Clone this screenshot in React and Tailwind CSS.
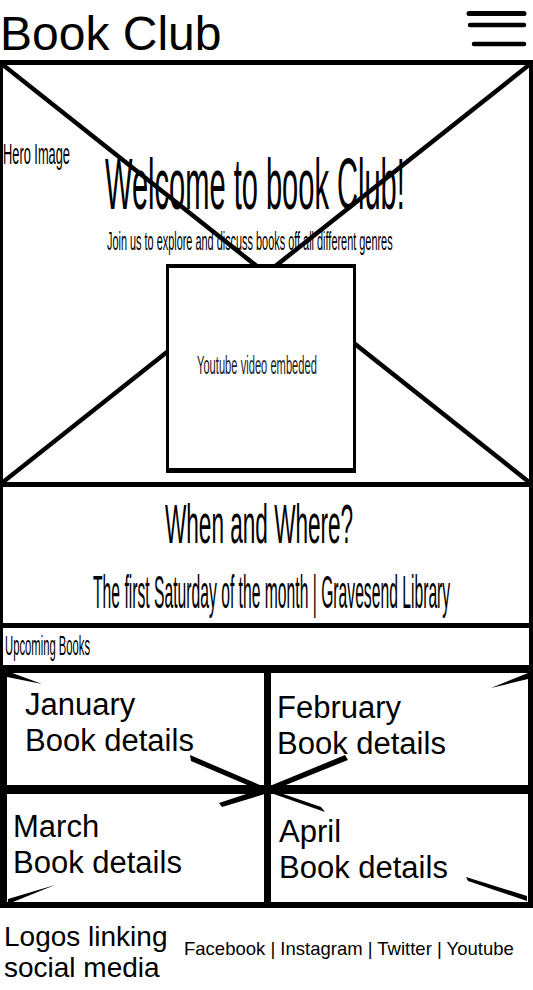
import React from 'react'

function Squeeze({ box, className, children }) {
    // narrow, tall wireframe lettering: scaled on x only, box holds the visible width
    return (
        <div className={`flex ${box}`}>
            <span className={`shrink-0 whitespace-nowrap leading-none origin-left ${className}`}>
                {children}
            </span>
        </div>
    )
}

function Menu() {
    return (
        <svg width="70" height="44" viewBox="0 0 70 44" className="mt-[8px] mr-[3px]">
            <g stroke="black" strokeLinecap="round">
                <line x1="9" y1="5.5" x2="64" y2="5.5" strokeWidth="5" />
                <line x1="10" y1="17" x2="64" y2="17" strokeWidth="4.5" />
                <line x1="14" y1="36" x2="64" y2="36" strokeWidth="4.5" />
            </g>
        </svg>
    )
}

function Cell({ month, pad }) {
    return (
        <div className={`bg-white text-[31px] leading-[36px] ${pad}`}>
            <div>{month}</div>
            <div>Book details</div>
        </div>
    )
}

export default function App() {
    return (
        <div className="w-[533px] min-h-[990px] overflow-hidden bg-white text-black font-['Liberation_Sans',Arial,sans-serif]">
            <header className="flex h-[60px] items-start justify-between">
                <h1 className="pt-[10px] text-[48px] leading-none font-normal">Book Club</h1>
                <Menu />
            </header>

            <section className="relative h-[427px] border-t-[5px] border-b-[5px] border-l-[3px] border-r-[4px] border-black">
                <svg className="absolute inset-0 h-full w-full" viewBox="0 0 100 100" preserveAspectRatio="none">
                    <line x1="0" y1="0" x2="100" y2="100" stroke="black" strokeWidth="4.5" vectorEffect="non-scaling-stroke" />
                    <line x1="100" y1="0" x2="0" y2="100" stroke="black" strokeWidth="4.5" vectorEffect="non-scaling-stroke" />
                </svg>
                <div className="absolute left-0 top-[75px]">
                    <Squeeze box="w-[67px]" className="text-[29px] scale-x-[0.442]">Hero Image</Squeeze>
                </div>
                <div className="relative flex flex-col items-center pt-[82px]">
                    <Squeeze box="w-[300px] mr-[22px]" className="text-[73px] scale-x-[0.398]">
                        Welcome to book Club!
                    </Squeeze>
                    <Squeeze box="w-[286px] mr-[32px] mt-[9px]" className="text-[25px] scale-x-[0.436]">
                        Join us to explore and discuss books off all different genres
                    </Squeeze>
                    <div className="mt-[10px] mr-[10px] flex h-[209px] w-[190px] items-center justify-center border-t-4 border-b-[5px] border-x-[3px] border-black bg-white pb-[7px]">
                        <Squeeze box="w-[121px] mr-[7px]" className="text-[26px] text-[#222] scale-x-[0.429]">
                            Youtube video embeded
                        </Squeeze>
                    </div>
                </div>
            </section>

            <section className="flex h-[141px] flex-col items-center border-b-[5px] border-l-[3px] border-r-[4px] border-black pt-[9px]">
                <Squeeze box="w-[188px] mr-[14px]" className="text-[56px] scale-x-[0.403]">When and Where?</Squeeze>
                <Squeeze box="w-[357px] ml-[11px] mt-[17px]" className="text-[46px] scale-x-[0.341]">
                    The first Saturday of the month | Gravesend Library
                </Squeeze>
            </section>

            <section className="h-[37px] border-l-[3px] border-r-[4px] border-black pl-[2px] pt-[5px]">
                <Squeeze box="w-[85px]" className="text-[27px] scale-x-[0.417]">Upcoming Books</Squeeze>
            </section>

            <section className="relative grid grid-cols-2 grid-rows-[112px_108px] gap-x-[7px] gap-y-[9px] bg-black pt-[8px] pb-[6px] pl-[7px] pr-[5px]">
                <Cell month="January" pad="pl-[18px] pt-[14px]" />
                <Cell month="February" pad="pl-[6px] pt-[17px]" />
                <Cell month="March" pad="pl-[6px] pt-[15px]" />
                <Cell month="April" pad="pl-[8px] pt-[20px]" />
                <svg className="pointer-events-none absolute inset-0 h-full w-full" viewBox="0 0 533 243">
                    <g fill="black">
                        <polygon points="7,6 7,12 42,19" />
                        <polygon points="528,8 528,14 491,23" />
                        <polygon points="190,90 191,96 266,128 267,123" />
                        <polygon points="265,123 266,128 348,95 345,90" />
                        <polygon points="264,123 268,128 222,142 219,138" />
                        <polygon points="266,123 268,127 325,147 321,142" />
                        <polygon points="466,212 468,216 527,236 527,231" />
                        <polygon points="8,234 8,239 55,220" />
                    </g>
                </svg>
            </section>

            <footer className="flex items-start pl-[4px] pt-[13px]">
                <div className="w-[180px] text-[28px] leading-[31px]">
                    Logos linking
                    <br />
                    social media
                </div>
                <p className="mt-[19px] text-[18.5px] leading-none">Facebook | Instagram | Twitter | Youtube</p>
            </footer>
        </div>
    )
}
